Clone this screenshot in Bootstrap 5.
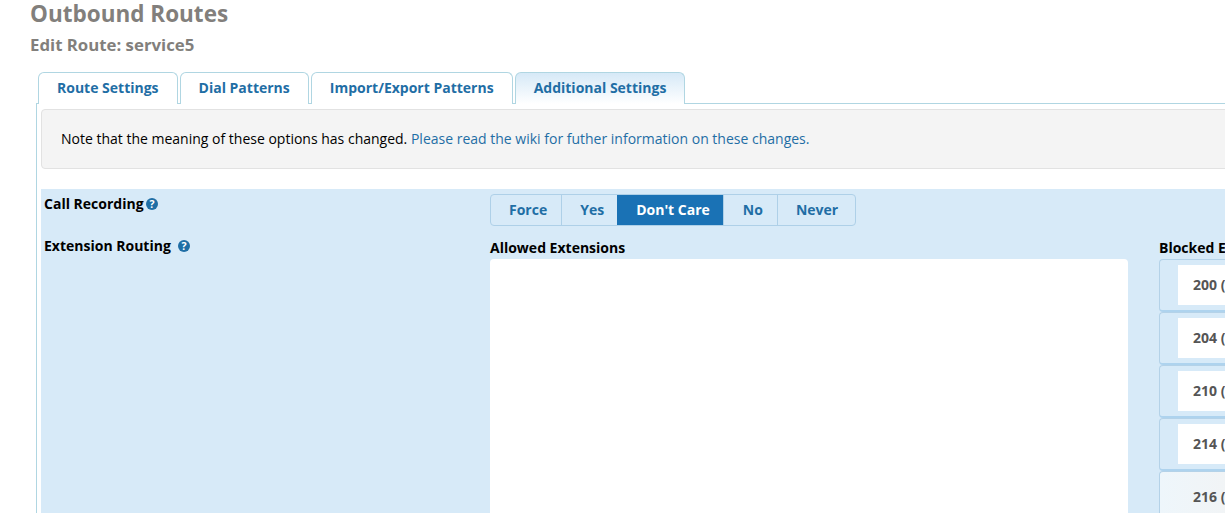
<!DOCTYPE html>
<html lang="en">
<head>
<meta charset="utf-8">
<title>Outbound Routes</title>
<link rel="stylesheet" href="https://cdn.jsdelivr.net/npm/bootstrap@5.3.0/dist/css/bootstrap.min.css">
<style>
html,body{height:513px;overflow:hidden}
body{font-family:"Open Sans",sans-serif;font-size:14px;color:#000;background:#fff;width:1300px}
.page-wrap{padding-left:30px}
.route-title{font-size:22.5px;line-height:27px;font-weight:700;color:#827f7c;margin:0}
.route-sub{font-size:16.8px;line-height:20px;font-weight:700;color:#827f7c;margin:8px 0 0}
.tab-strip{display:flex;gap:2px;margin:17px 0 0 8px;height:31px;position:relative;z-index:1}
.tab-item{height:32px;padding:5px 18px 0;border:1px solid #b0d6e2;border-bottom:0;border-radius:6px 6px 0 0;font-weight:700;font-size:14px;line-height:19px;color:#1f6ea5;background:#fff}
.tab-item.is-on{background:linear-gradient(#d6e9f7,#fff)}
.tab-panel{margin-left:6px;border-left:1px solid #b0d6e2;border-top:1px solid #b0d6e2;padding:5px 0 0 4px}
.note-box{height:60px;background:#f4f4f4;border:1px solid #e2e2e2;border-radius:4px;padding:19px 19px 0;line-height:19px;font-size:14px}
.note-box a{color:#1f6ea5;text-decoration:none}
.set-area{margin-top:20px;background:#d7eaf8;height:340px;padding:5px 0 0 3px}
.set-row{display:flex}
.set-label{width:446px;font-weight:700;font-size:14px;line-height:19px;flex:none}
.call-row{height:42px}
.hint{display:inline-block;width:12px;height:12px;vertical-align:-1px}
.hint-tight{margin-left:-1px}
.seg{display:inline-flex;height:32px;border:1px solid #aed0e8;border-radius:4px}
.seg span{font-weight:700;font-size:14px;line-height:30px;color:#1f6ea5;padding:0 14px 0 18px;border-left:1px solid #aed0e8}
.seg span:first-child{border-left:0}
.seg span.seg-yes{padding:0 13px 0 18px}
.seg span.seg-no{padding:0 14px 0 19px}
.seg span:last-child{padding-right:17px}
.seg span.is-on{background:#1a72b5;color:#fff;border-left:0;padding:0 13px 0 19px}
.col-allowed{width:669px;flex:none;padding-top:2px}
.list-head{font-weight:700;font-size:14px;line-height:19px;white-space:nowrap}
.allow-box{height:300px;width:638px;background:#fff;border-radius:4px;margin-top:2px}
.block-item{height:53px;border:1px solid #b4d2e8;border-bottom:2px solid #aed3ee;border-radius:4px 0 0 4px;border-right:0;padding:5px 0 0 18px;width:100px}
.block-item span{display:block;height:40px;background:#fff;font-weight:700;font-size:14px;line-height:40px;color:#555;padding-left:15px;white-space:nowrap;overflow:hidden}
.block-item.is-pale{background:linear-gradient(90deg,#eef6fb,#f3f3f3)}
.block-item.is-pale span{background:transparent}
.block-col{width:120px;overflow:hidden;padding-top:2px}
.block-list{margin-top:2px}
</style>
</head>
<body>
<div class="page-wrap">
  <h1 class="route-title">Outbound Routes</h1>
  <h2 class="route-sub">Edit Route: service5</h2>
  <div class="tab-strip">
    <div class="tab-item">Route Settings</div>
    <div class="tab-item">Dial Patterns</div>
    <div class="tab-item">Import/Export Patterns</div>
    <div class="tab-item is-on">Additional Settings</div>
  </div>
  <div class="tab-panel">
    <div class="note-box">Note that the meaning of these options has changed. <a href="#">Please read the wiki for futher information on these changes.</a></div>
    <div class="set-area">
      <div class="set-row call-row">
        <div class="set-label">Call Recording <svg class="hint hint-tight" viewBox="0 0 12 12"><circle cx="6" cy="6" r="6" fill="#1f6ea5"/><text x="6" y="10" font-size="10.5" font-weight="700" text-anchor="middle" fill="#fff" font-family="Open Sans">?</text></svg></div>
        <div class="seg"><span>Force</span><span class="seg-yes">Yes</span><span class="is-on">Don't Care</span><span class="seg-no">No</span><span>Never</span></div>
      </div>
      <div class="set-row">
        <div class="set-label">Extension Routing &nbsp;<svg class="hint" viewBox="0 0 12 12"><circle cx="6" cy="6" r="6" fill="#1f6ea5"/><text x="6" y="10" font-size="10.5" font-weight="700" text-anchor="middle" fill="#fff" font-family="Open Sans">?</text></svg></div>
        <div class="col-allowed">
          <div class="list-head">Allowed Extensions</div>
          <div class="allow-box"></div>
        </div>
        <div class="block-col">
          <div class="list-head">Blocked Extensions</div>
          <div class="block-list">
            <div class="block-item"><span>200 (</span></div>
            <div class="block-item"><span>204 (</span></div>
            <div class="block-item"><span>210 (</span></div>
            <div class="block-item"><span>214 (</span></div>
            <div class="block-item is-pale"><span>216 (</span></div>
          </div>
        </div>
      </div>
    </div>
  </div>
</div>
<script src="https://cdn.jsdelivr.net/npm/bootstrap@5.3.0/dist/js/bootstrap.bundle.min.js"></script>
</body>
</html>
